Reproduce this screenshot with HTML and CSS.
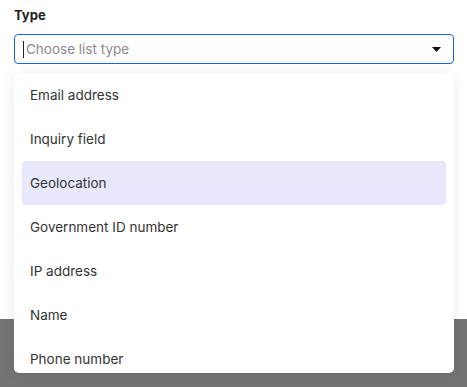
FILE: index.html
```html
<!DOCTYPE html>
<html>
<head>
<meta charset="utf-8">
<link rel="stylesheet" href="styles.css">
</head>
<body>
<div class="page">
  <div class="field">
    <div class="label">Type</div>
    <div class="select">
      <span class="caret"></span>
      <span class="placeholder">Choose list type</span>
      <svg class="arrow" width="9" height="5" viewBox="0 0 9 5"><path d="M0 0H9L4.5 5Z" fill="#111"/></svg>
    </div>
    <ul class="menu">
      <li class="item">Email address</li>
      <li class="item">Inquiry field</li>
      <li class="item active">Geolocation</li>
      <li class="item">Government ID number</li>
      <li class="item">IP address</li>
      <li class="item">Name</li>
      <li class="item">Phone number</li>
    </ul>
  </div>
</div>
<div class="overlay"></div>
</body>
</html>
```
FILE: styles.css
```css
* { box-sizing: border-box; }
html, body { margin: 0; padding: 0; }
body {
  width: 467px;
  height: 387px;
  overflow: hidden;
  background: #fff;
  font-family: Inter, "Noto Sans", sans-serif;
  color: #2b2b2b;
}
.page {
  height: 319px;
  padding: 6px 14px 0 14px;
}
.field { position: relative; }
.label {
  font-size: 13px;
  font-weight: 700;
  line-height: 18px;
  color: #222;
  margin-bottom: 10px;
}
.select {
  height: 30px;
  width: 440px;
  border: 1.5px solid #1d5fe6;
  border-radius: 4px;
  display: flex;
  align-items: center;
  padding: 0 12px 0 8px;
  background: #fff;
}
.caret {
  width: 1px;
  height: 17px;
  background: #222;
  margin-right: 2px;
}
.placeholder {
  flex: 1;
  font-size: 13.5px;
  color: #8a8a8a;
}
.arrow { display: block; }
.menu {
  position: absolute;
  left: 0;
  top: 67px;
  width: 440px;
  height: 300px;
  margin: 0;
  padding: 0 8px;
  list-style: none;
  background: #fff;
  border-radius: 5px;
  box-shadow: 0 2px 14px rgba(0,0,0,0.09);
  overflow: hidden;
  z-index: 2;
}
.item {
  height: 44px;
  display: flex;
  align-items: center;
  padding-left: 8px;
  font-size: 13.5px;
  color: #333;
  border-radius: 4px;
}
.item.active { background: #e8e8fd; }
.overlay {
  height: 68px;
  background: #747474;
}
```
